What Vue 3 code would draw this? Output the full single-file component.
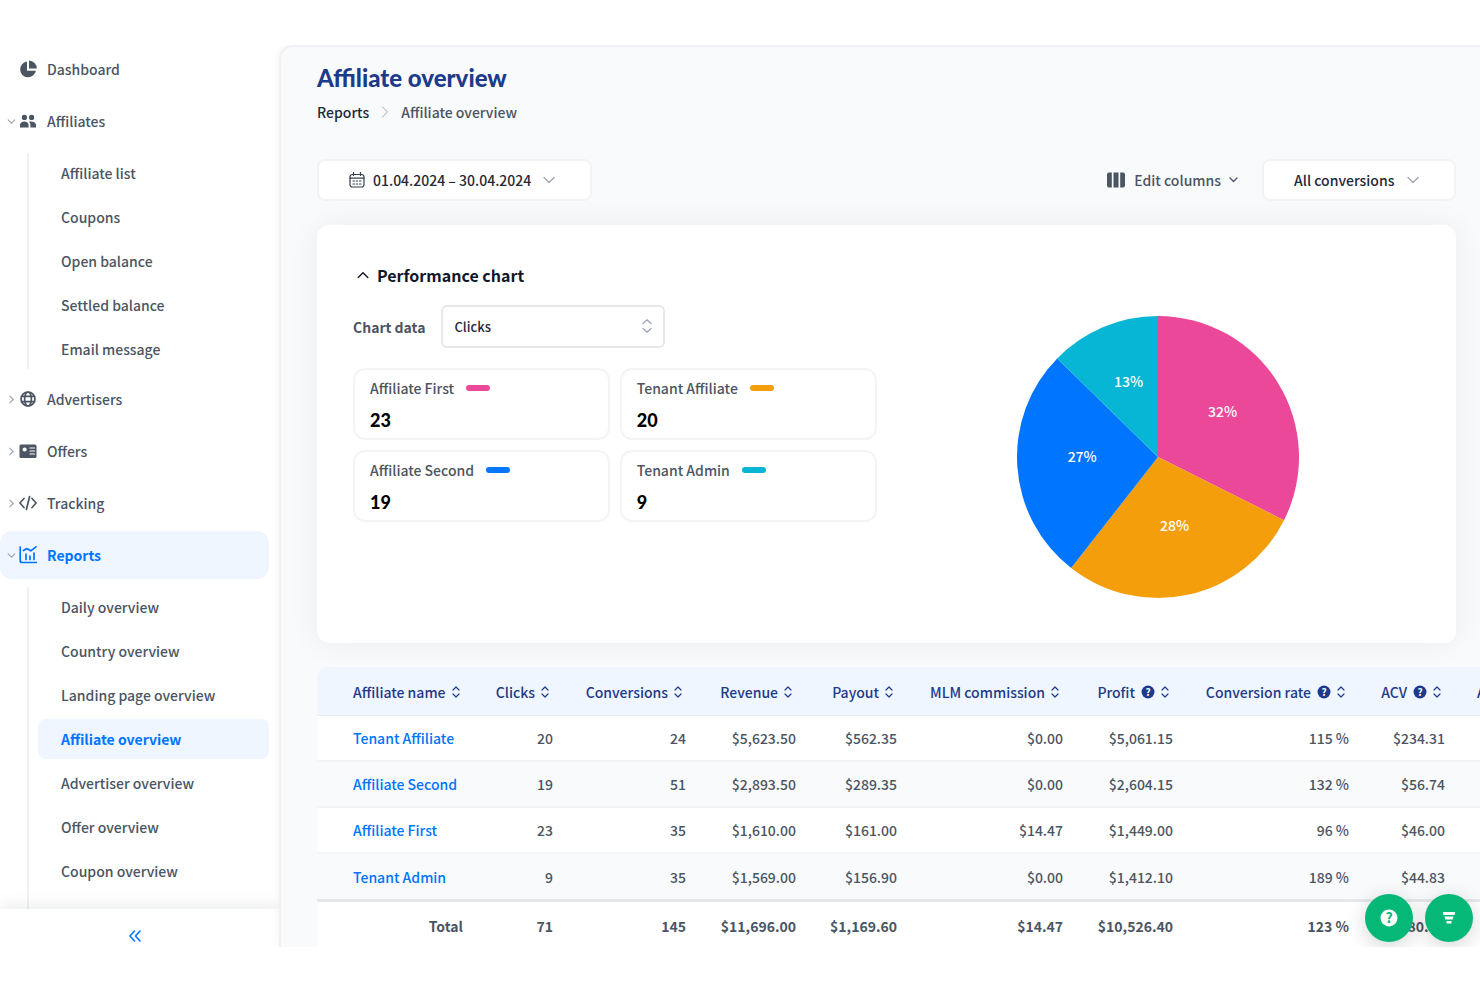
<template>
  <div class="app">
    <aside class="sidebar">
      <nav class="nav">
        <div v-for="item in menu" :key="item.label" class="nav-group">
          <a href="#" class="nav-item" :class="{ active: item.active }">
            <svg v-if="item.children || item.closed" class="arrow" viewBox="0 0 8 8">
              <path v-if="item.children" d="M1 2.5 4 5.5 7 2.5" />
              <path v-else d="M2.5 1 5.5 4 2.5 7" />
            </svg>
            <span v-else class="arrow"></span>
            <svg class="nav-icon" viewBox="0 0 18 18">
              <template v-if="item.icon === 'pie'">
                <path d="M8 1.6a7.9 7.9 0 1 0 8.9 9.100H8z" />
                <path d="M10 .4v8.200h7.800A8 8 0 0 0 10 .4z" />
              </template>
              <template v-else-if="item.icon === 'users'">
                <circle cx="5.4" cy="5.4" r="2.6" />
                <circle cx="12.6" cy="5.4" r="2.6" />
                <path d="M1 15.500v-2.400c0-2.400 2-3.700 4.300-3.700s4.300 1.300 4.300 3.700v2.400z" />
                <path d="M10 9.700c3.200-.9 7 .3 7 3.400v2.400h-5.600v-2.400c0-1.400-.5-2.600-1.400-3.400z" />
              </template>
              <template v-else-if="item.icon === 'globe'">
                <g class="line">
                  <circle cx="9" cy="9" r="7" />
                  <ellipse cx="9" cy="9" rx="3.400" ry="7" />
                  <path d="M2.600 6.400h12.800M2.600 11.600h12.800" />
                </g>
              </template>
              <template v-else-if="item.icon === 'card'">
                <rect x=".5" y="2.500" width="17" height="13.500" rx="1.500" />
                <circle cx="5.600" cy="7.500" r="2.100" fill="#fff" />
                <path d="M11 6h4.500M11 9h4.500M11 12h4.500" stroke="#fff" stroke-width="1.200" />
              </template>
              <template v-else-if="item.icon === 'code'">
                <path class="line" d="M5 4.500.9 9 5 13.500M13 4.500 17.100 9 13 13.500M10.600 2.500 7.400 15.500" />
              </template>
              <template v-else>
                <path class="line" d="M1.200 1v13.500a2 2 0 0 0 2 2H17.500M4.500 4.500l3.300-2 4 2.300 5.200-4M7 8v5.500M11 10v3.500M15 7v6.500" />
              </template>
            </svg>
            <span>{{ item.label }}</span>
          </a>
          <div v-if="item.children" class="sub-nav">
            <a
              v-for="child in item.children"
              :key="child"
              href="#"
              class="sub-item"
              :class="{ active: child === current }"
            >{{ child }}</a>
          </div>
        </div>
      </nav>
      <button class="collapse" aria-label="Collapse menu">
        <svg width="12" height="12" viewBox="0 0 12 12">
          <path d="M5.500 1 1 6l4.500 5M11 1 6.500 6 11 11" />
        </svg>
      </button>
    </aside>

    <main class="main">
      <h1>Affiliate overview</h1>
      <div class="breadcrumbs">
        <a href="#">Reports</a>
        <svg width="8" height="12" viewBox="0 0 8 12"><path d="M1.500 1 6.500 6l-5 5" /></svg>
        <span>Affiliate overview</span>
      </div>

      <div class="filters">
        <button class="box date-box">
          <svg class="calendar" width="16" height="16" viewBox="0 0 16 16">
            <rect x="1" y="2.500" width="14" height="12.500" rx="2.500" />
            <path d="M1 6.200h14M4.500.5v3M11.500.5v3M4 9h1.500M7.200 9h1.500M10.500 9H12M4 12h1.500M7.200 12h1.500M10.500 12H12" />
          </svg>
          <span>01.04.2024 – 30.04.2024</span>
          <svg class="chevron" width="12" height="8" viewBox="0 0 12 8"><path d="M1 1.500 6 6.500l5-5" /></svg>
        </button>
        <div class="filters-right">
          <button class="edit-columns">
            <svg width="20" height="16" viewBox="0 0 20 16">
              <path d="M3 .5h2.800v15H3a2 2 0 0 1-2-2v-11a2 2 0 0 1 2-2zM7.500.5h5v15h-5zM14.200.5H17a2 2 0 0 1 2 2v11a2 2 0 0 1-2 2h-2.800z" />
            </svg>
            <span>Edit columns</span>
            <svg class="chevron dark" width="9" height="6" viewBox="0 0 9 6"><path d="M1 1l3.500 3.500L8 1" /></svg>
          </button>
          <label class="box">
            <select v-model="conversionFilter" aria-label="Conversions">
              <option>All conversions</option>
            </select>
            <svg class="chevron" width="12" height="8" viewBox="0 0 12 8"><path d="M1 1.500 6 6.500l5-5" /></svg>
          </label>
        </div>
      </div>

      <section class="card">
        <div>
          <button class="card-title">
            <svg width="12" height="8" viewBox="0 0 12 8"><path d="M1.200 6.500 6 1.700l4.800 4.800" /></svg>
            <span>Performance chart</span>
          </button>
          <div class="chart-data">
            <label for="chart-data">Chart data</label>
            <div class="select-wrap">
              <select id="chart-data" v-model="chartData">
                <option>Clicks</option>
              </select>
              <svg class="sort" width="10" height="14" viewBox="0 0 10 14">
                <path d="M1 4.500 5 .8l4 3.700M1 9.500l4 3.700 4-3.700" />
              </svg>
            </div>
          </div>
          <div class="stats">
            <div v-for="s in stats" :key="s.name" class="stat">
              <div class="stat-name">
                <span>{{ s.name }}</span>
                <i :style="{ background: s.color }"></i>
              </div>
              <strong>{{ s.value }}</strong>
            </div>
          </div>
        </div>
        <svg class="pie" viewBox="-141 -141 282 282">
          <path v-for="s in slices" :key="s.name" :d="s.path" :fill="s.color" />
          <text v-for="s in slices" :key="s.name + '-label'" :x="s.x" :y="s.y">{{ s.percent }}%</text>
        </svg>
      </section>

      <div class="table-wrap">
        <table>
          <colgroup>
            <col v-for="c in columns" :key="c.label" :style="{ width: c.width + 'px' }" />
          </colgroup>
          <thead>
            <tr>
              <th v-for="c in columns" :key="c.label">
                <button>
                  <span>{{ c.label }}</span>
                  <svg v-if="c.help" class="help" width="14" height="14" viewBox="0 0 14 14">
                    <circle cx="7" cy="7" r="6.500" />
                    <text x="7" y="10.500">?</text>
                  </svg>
                  <svg class="sort" width="8" height="12" viewBox="0 0 8 12">
                    <path d="M1 4 4 1l3 3M1 8l3 3 3-3" />
                  </svg>
                </button>
              </th>
            </tr>
          </thead>
          <tbody>
            <tr v-for="row in rows" :key="row[0]">
              <td v-for="(cell, i) in row" :key="i">
                <a v-if="i === 0" href="#">{{ cell }}</a>
                <template v-else>{{ cell }}</template>
              </td>
            </tr>
          </tbody>
          <tfoot>
            <tr>
              <td v-for="(cell, i) in total" :key="i">{{ cell }}</td>
            </tr>
          </tfoot>
        </table>
      </div>
    </main>

    <div class="fabs">
      <button aria-label="Help">
        <svg width="18" height="18" viewBox="0 0 18 18">
          <circle cx="9" cy="9" r="8.500" fill="#fff" />
          <text x="9" y="14">?</text>
        </svg>
      </button>
      <button aria-label="Filter">
        <svg width="14" height="14" viewBox="0 0 14 14">
          <path d="M.8 1h12.400l-.6 3H1.400zM2.500 5.500h9L10.600 8.500H3.400zM4.500 10h5v2.500h-5z" fill="#fff" />
        </svg>
      </button>
    </div>
  </div>
</template>

<script setup>
import { ref, computed } from 'vue'

const current = 'Affiliate overview'
const conversionFilter = ref('All conversions')
const chartData = ref('Clicks')

const menu = [
  { label: 'Dashboard', icon: 'pie' },
  {
    label: 'Affiliates',
    icon: 'users',
    children: ['Affiliate list', 'Coupons', 'Open balance', 'Settled balance', 'Email message']
  },
  { label: 'Advertisers', icon: 'globe', closed: true },
  { label: 'Offers', icon: 'card', closed: true },
  { label: 'Tracking', icon: 'code', closed: true },
  {
    label: 'Reports',
    icon: 'chart',
    active: true,
    children: [
      'Daily overview',
      'Country overview',
      'Landing page overview',
      'Affiliate overview',
      'Advertiser overview',
      'Offer overview',
      'Coupon overview'
    ]
  }
]

const stats = [
  { name: 'Affiliate First', value: 23, color: '#ec4899' },
  { name: 'Tenant Affiliate', value: 20, color: '#f59e0b' },
  { name: 'Affiliate Second', value: 19, color: '#0075ff' },
  { name: 'Tenant Admin', value: 9, color: '#06b6d4' }
]

// pie slices start at 12 o'clock and go clockwise
const slices = computed(() => {
  const sum = stats.reduce((acc, s) => acc + s.value, 0)
  const r = 141
  const labelR = 76
  let angle = 0
  return stats.map((s) => {
    const start = angle
    const end = angle + (s.value / sum) * Math.PI * 2
    const mid = (start + end) / 2
    angle = end
    return {
      ...s,
      percent: Math.round((s.value / sum) * 100),
      path: `M0 0L${r * Math.sin(start)} ${-r * Math.cos(start)}A${r} ${r} 0 0 1 ${r * Math.sin(end)} ${-r * Math.cos(end)}Z`,
      x: labelR * Math.sin(mid),
      y: -labelR * Math.cos(mid)
    }
  })
})

const columns = [
  { label: 'Affiliate name', width: 162 },
  { label: 'Clicks', width: 90 },
  { label: 'Conversions', width: 133 },
  { label: 'Revenue', width: 110 },
  { label: 'Payout', width: 101 },
  { label: 'MLM commission', width: 166 },
  { label: 'Profit', width: 110, help: true },
  { label: 'Conversion rate', width: 176, help: true },
  { label: 'ACV', width: 96, help: true },
  { label: 'AOV', width: 96, help: true }
]

const rows = [
  ['Tenant Affiliate', '20', '24', '$5,623.50', '$562.35', '$0.00', '$5,061.15', '115 %', '$234.31', ''],
  ['Affiliate Second', '19', '51', '$2,893.50', '$289.35', '$0.00', '$2,604.15', '132 %', '$56.74', ''],
  ['Affiliate First', '23', '35', '$1,610.00', '$161.00', '$14.47', '$1,449.00', '96 %', '$46.00', ''],
  ['Tenant Admin', '9', '35', '$1,569.00', '$156.90', '$0.00', '$1,412.10', '189 %', '$44.83', '']
]

const total = ['Total', '71', '145', '$11,696.00', '$1,169.60', '$14.47', '$10,526.40', '123 %', '$80.66', '']
</script>

<style>
body {
  margin: 0;
  background: #fff;
}
</style>

<style scoped>
* {
  box-sizing: border-box;
}

.app {
  position: relative;
  display: flex;
  height: 100vh;
  border: solid #fff;
  border-width: 45px 0 40px;
  overflow: hidden;
  font-family: "Noto Sans CJK SC", "Noto Sans", sans-serif;
  font-size: 14px;
  line-height: 20px;
  font-weight: 500;
  color: #4b5563;
}

a {
  color: inherit;
  text-decoration: none;
}

button,
select {
  margin: 0;
  padding: 0;
  border: 0;
  background: none;
  font: inherit;
  color: inherit;
  cursor: pointer;
  appearance: none;
}

svg {
  flex: none;
}

svg path {
  stroke-linecap: round;
  stroke-linejoin: round;
}

/* sidebar */
.sidebar {
  flex: none;
  display: flex;
  flex-direction: column;
  width: 279px;
}

.nav {
  flex: 1;
  min-height: 0;
  overflow: hidden;
  padding-right: 10px;
}

.nav-item {
  display: flex;
  align-items: center;
  height: 48px;
  margin-bottom: 4px;
  padding-left: 7px;
  border-radius: 12px;
}

.arrow {
  width: 9px;
  height: 9px;
  margin-right: 3px;
  fill: none;
  stroke: #9ca3af;
}

.nav-icon {
  width: 18px;
  height: 18px;
  margin-right: 10px;
  fill: currentColor;
}

.nav-icon .line {
  fill: none;
  stroke: currentColor;
  stroke-width: 1.7;
}

.sub-nav {
  display: flex;
  flex-direction: column;
  gap: 4px;
  margin: 8px 0 6px 27px;
  padding-left: 9px;
  border-left: 2px solid #f0f1f4;
}

.nav-group:last-child .sub-nav {
  padding-bottom: 24px;
}

.sub-item {
  padding: 10px 0 10px 23px;
  border-radius: 8px;
}

.active {
  background: #eff6ff;
  color: #0075ff;
  font-weight: 700;
}

.collapse {
  position: relative;
  height: 38px;
  padding: 16px 10px 0 0;
  background: #fff;
  box-shadow: 0 -4px 16px rgba(17, 24, 39, 0.08);
}

.collapse svg {
  fill: none;
  stroke: #0075ff;
  stroke-width: 1.6;
}

/* content */
.main {
  position: relative;
  flex: 1;
  min-width: 0;
  overflow: hidden;
  padding: 17px 24px 0 36px;
  border: 2px solid #f0f1f4;
  border-width: 2px 0 0 2px;
  border-radius: 14px 0 0 0;
  background: #f9fafc;
  box-shadow: 0 0 12px rgba(17, 24, 39, 0.05);
}

h1 {
  margin: 0;
  font-family: Lato, "Noto Sans", sans-serif;
  font-size: 24px;
  line-height: 28px;
  font-weight: 900;
  color: #1e3a8a;
}

.breadcrumbs {
  display: flex;
  align-items: center;
  gap: 12px;
  margin-top: 10px;
}

.breadcrumbs a {
  color: #1f2937;
}

.breadcrumbs svg {
  fill: none;
  stroke: #9ca3af;
}

.filters {
  display: flex;
  justify-content: space-between;
  margin: 37px 0 24px;
}

.filters-right {
  display: flex;
  gap: 24px;
}

.box {
  display: flex;
  align-items: center;
  gap: 12px;
  height: 42px;
  padding: 0 35px 0 30px;
  border: 2px solid #f2f3f6;
  border-radius: 8px;
  background: #fff;
  color: #1f2937;
}

.calendar {
  margin-right: -4px;
  fill: none;
  stroke: #374151;
  stroke-width: 1.2;
}

.chevron {
  fill: none;
  stroke: #9ca3af;
  stroke-width: 1.3;
}

.chevron.dark {
  stroke: #4b5563;
}

.edit-columns {
  display: flex;
  align-items: center;
  gap: 8px;
}

.edit-columns svg:first-child {
  fill: #4b5563;
}

.card {
  display: grid;
  grid-template-columns: 1fr 1fr;
  gap: 20px;
  min-height: 418px;
  padding: 36px;
  border-radius: 12px;
  background: #fff;
  box-shadow: 0 0 32px rgba(17, 24, 39, 0.06);
}

.card-title {
  display: flex;
  align-items: center;
  gap: 8px;
  height: 28px;
  padding-left: 4px;
  font-size: 16px;
  font-weight: 700;
  color: #111827;
}

.card-title svg {
  fill: none;
  stroke: #111827;
  stroke-width: 1.4;
}

.chart-data {
  display: flex;
  align-items: center;
  gap: 16px;
  margin: 16px 0 20px;
  font-weight: 700;
}

.select-wrap {
  position: relative;
  width: 224px;
}

.select-wrap select {
  display: block;
  width: 100%;
  height: 43px;
  padding: 0 11px;
  border: 2px solid #e5e7eb;
  border-radius: 6px;
  background: #fff;
  color: #1f2937;
  font-size: 13px;
  font-weight: 500;
}

.sort {
  fill: none;
  stroke: currentColor;
  stroke-width: 1.2;
}

.select-wrap .sort {
  position: absolute;
  top: 14px;
  right: 13px;
  color: #9ca3af;
  pointer-events: none;
}

.stats {
  display: grid;
  grid-template-columns: 1fr 1fr;
  gap: 10px;
}

.stat {
  padding: 8px 15px 6px;
  border: 2px solid #f3f4f6;
  border-radius: 12px;
}

.stat-name {
  display: flex;
  align-items: center;
  gap: 12px;
}

.stat-name i {
  width: 24px;
  height: 6px;
  border-radius: 3px;
}

.stat strong {
  display: block;
  margin-top: 10px;
  font-family: Lato, "Noto Sans", sans-serif;
  font-size: 18px;
  line-height: 24px;
  font-weight: 900;
  color: #000;
}

.pie {
  width: 282px;
  height: 282px;
  place-self: center;
  margin-top: 46px;
}

.pie text {
  fill: #fff;
  text-anchor: middle;
}

/* table */
.table-wrap {
  margin: 24px -24px 0 0;
  overflow: hidden;
  border-radius: 12px 0 0 0;
  background: #fff;
}

table {
  width: 1240px;
  table-layout: fixed;
  border-collapse: separate;
  border-spacing: 0;
}

th,
td {
  padding: 0 16px;
  text-align: right;
  white-space: nowrap;
}

th {
  height: 49px;
  background: #eff6ff;
  border-bottom: 1px solid #e8eef7;
}

th:first-child,
tbody td:first-child {
  padding-left: 36px;
  padding-right: 0;
  text-align: left;
}

th button {
  display: inline-flex;
  align-items: center;
  gap: 6px;
  padding-right: 4px;
  color: #1e3a8a;
  font-weight: 500;
  vertical-align: middle;
}

.help {
  fill: #1e3a8a;
}

.help text {
  fill: #fff;
  font-size: 10px;
  font-weight: 700;
  text-anchor: middle;
}

td {
  height: 46px;
  border-bottom: 2px solid #f3f4f6;
}

tbody tr:nth-child(even) td {
  background: #f9fafc;
}

tbody tr:last-child td {
  height: 48px;
  border-bottom: 3px solid #e5e7eb;
}

tbody a {
  color: #0075ff;
}

tfoot td {
  height: 48px;
  border: 0;
  font-weight: 700;
}

/* floating buttons */
.fabs {
  position: absolute;
  right: 7px;
  bottom: 5px;
  display: flex;
  gap: 12px;
}

.fabs button {
  display: flex;
  align-items: center;
  justify-content: center;
  width: 48px;
  height: 48px;
  border-radius: 50%;
  background: #06b877;
  box-shadow: 0 4px 20px rgba(17, 24, 39, 0.18);
}

.fabs text {
  fill: #06b877;
  font-size: 14px;
  font-weight: 700;
  text-anchor: middle;
}
</style>
